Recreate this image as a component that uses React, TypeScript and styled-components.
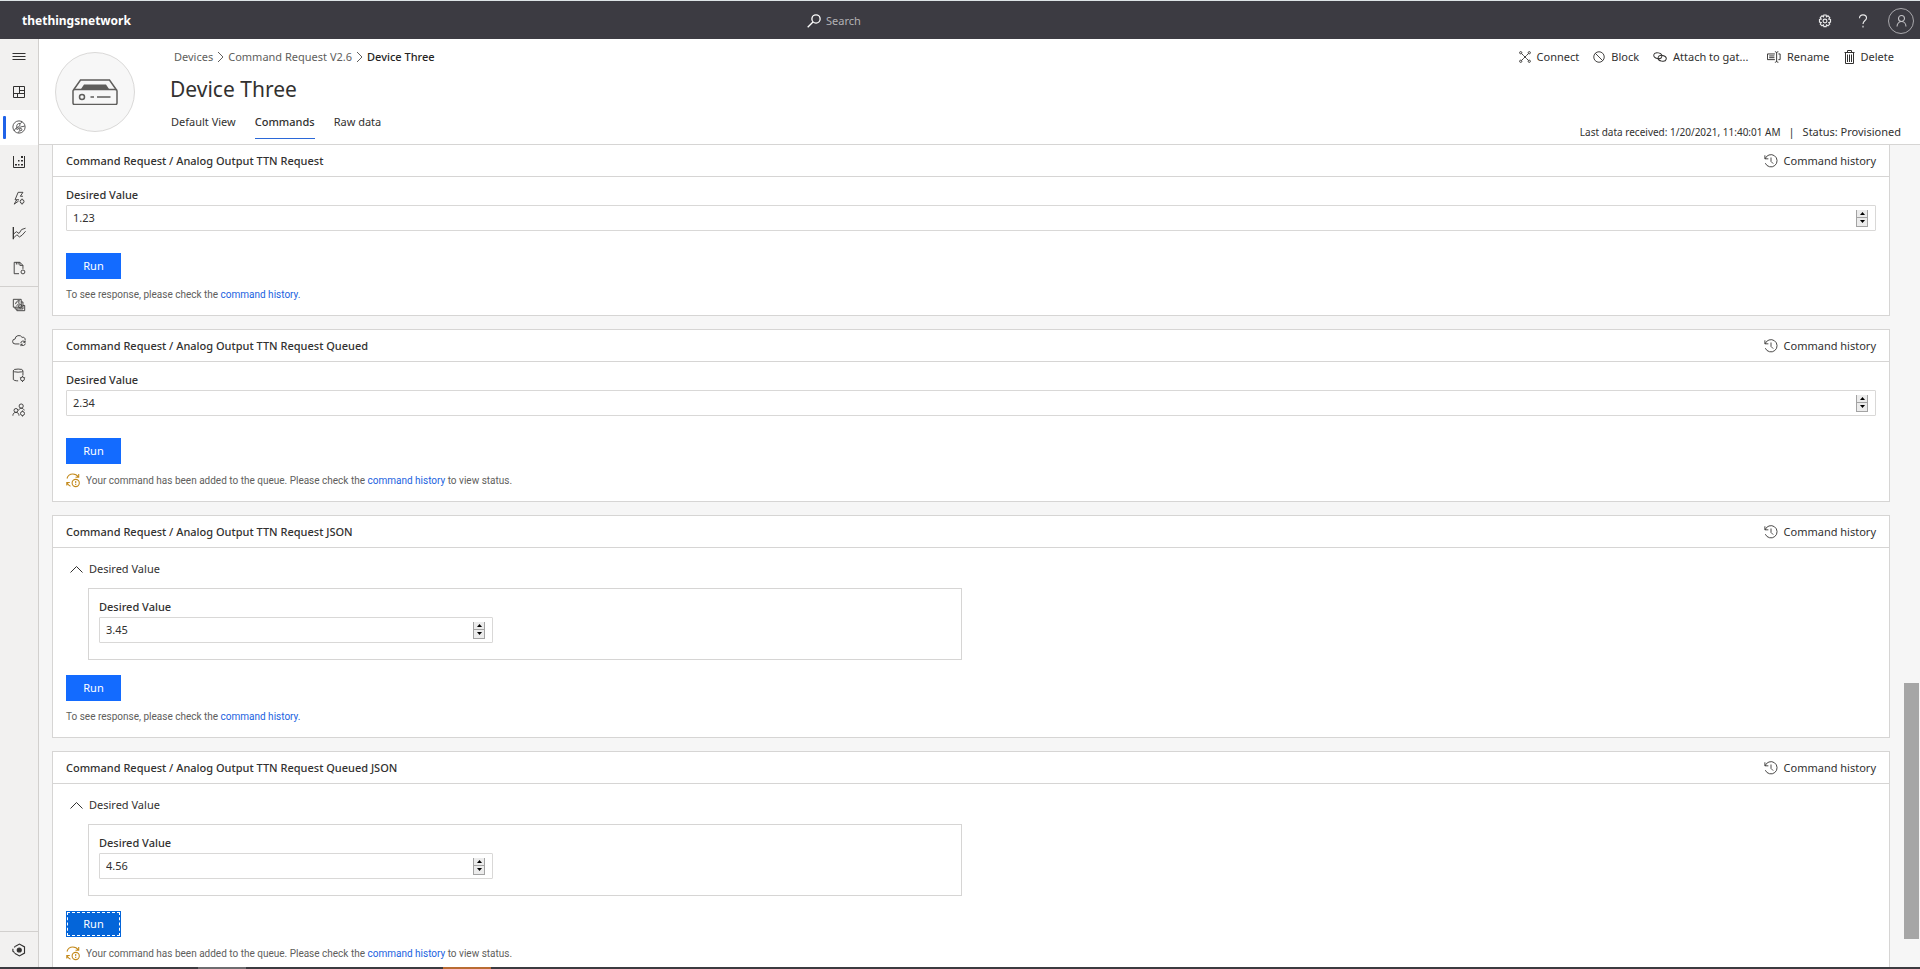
import React, { useId, useState } from "react";
import styled, { createGlobalStyle } from "styled-components";

const GlobalStyle = createGlobalStyle`
  *, *::before, *::after { box-sizing: border-box; }
  body {
    margin: 0;
    background: #f6f6f6;
    color: #323130;
    font-family: "Noto Sans", "Open Sans", sans-serif;
    font-size: 11px;
    line-height: 16px;
  }
  button, input { font: inherit; color: inherit; }
  button {
    margin: 0;
    padding: 0;
    border: 0;
    background: none;
    cursor: pointer;
  }
  a { color: #1a62e0; text-decoration: none; }
`;

/* ---------- page frame ---------- */

const Page = styled.div`
  display: flex;
  flex-direction: column;
  height: 100vh;
`;

const Shell = styled.div`
  display: flex;
  flex: 1;
  min-height: 0;
`;

const Workspace = styled.div`
  display: flex;
  flex: 1;
  flex-direction: column;
  min-width: 0;
`;

const BottomStrip = styled.div`
  height: 2px;
  background: linear-gradient(
    to right,
    #3c3b40 198px,
    #6e6d70 198px 246px,
    #3c3b40 246px 443px,
    #b96c33 443px 491px,
    #3c3b40 491px
  );
`;

/* ---------- top bar ---------- */

const TopBar = styled.header`
  display: grid;
  grid-template-columns: 1fr 320px 1fr;
  align-items: center;
  height: 39px;
  padding: 1px 0 0 22px;
  border-top: 1px solid #dde4e6;
  background: #3c3b42;
  color: #fff;
`;

const Brand = styled.span`
  font-size: 12px;
  font-weight: 700;
`;

const SearchBox = styled.label`
  display: flex;
  align-items: center;
  gap: 5px;
  padding-left: 7px;
  margin-left: -11px;
  margin-right: 11px;
`;

const SearchInput = styled.input`
  flex: 1;
  min-width: 0;
  padding: 0;
  border: 0;
  outline: 0;
  background: none;
  &::placeholder { color: #b3b2b5; opacity: 1; }
`;

const TopActions = styled.div`
  display: flex;
  align-items: center;
  justify-content: flex-end;
  gap: 12px;
  padding-right: 6px;
`;

const TopButton = styled.button`
  display: flex;
  align-items: center;
  justify-content: center;
  width: 26px;
  height: 26px;
  color: #e9e9ea;
`;

const AvatarButton = styled(TopButton)`
  border: 1px solid #a9a8ac;
  border-radius: 50%;
  color: #c4c3c6;
`;

/* ---------- side navigation ---------- */

const SideNav = styled.nav`
  display: flex;
  flex-direction: column;
  width: 39px;
  border-right: 1px solid #d2d0ce;
  background: #f2f1f0;
`;

const NavGroup = styled.div`
  display: flex;
  flex-direction: column;
  &:first-child { height: 247px; }
  & + & { border-top: 1px solid #d2d0ce; }
  &:last-child { margin-top: auto; }
`;

const NavButton = styled.button<{ $active?: boolean }>`
  position: relative;
  display: flex;
  flex: 1 0 35px;
  align-items: center;
  justify-content: center;
  background: ${(p) => (p.$active ? "#fff" : "none")};
  &::before {
    content: "";
    position: absolute;
    left: 3px;
    width: 3px;
    height: 23px;
    border-radius: 1px;
    background: ${(p) => (p.$active ? "#1f62e8" : "none")};
  }
`;

/* ---------- device header ---------- */

const DeviceHeader = styled.section`
  display: flex;
  height: 106px;
  padding: 0 19px 0 16px;
  border-bottom: 1px solid #d6d5d4;
  background: #fff;
`;

const DeviceBadge = styled.div`
  display: flex;
  flex: none;
  align-items: center;
  justify-content: center;
  width: 80px;
  height: 80px;
  margin: 13px 35px 0 0;
  border: 1px solid #dad9d8;
  border-radius: 50%;
  background: #f7f7f7;
  color: #5f5e5c;
`;

const DeviceInfo = styled.div`
  display: flex;
  flex: 1;
  flex-direction: column;
  padding-top: 10px;
`;

const Crumbs = styled.nav`
  display: flex;
  align-items: center;
  gap: 4px;
  padding-left: 4px;
  color: #605e5c;
  a { color: inherit; }
`;

const CurrentCrumb = styled.span`
  color: #252423;
  font-weight: 500;
`;

const Title = styled.h1`
  margin: 9px 0 8px;
  font-size: 21px;
  font-weight: 400;
  line-height: 30px;
`;

const Tabs = styled.div`
  display: flex;
  gap: 19px;
  padding-left: 1px;
`;

const Tab = styled.button<{ $selected?: boolean }>`
  height: 27px;
  padding-bottom: 7px;
  border-bottom: 1px solid ${(p) => (p.$selected ? "#2b68d8" : "transparent")};
  font-weight: ${(p) => (p.$selected ? 500 : 400)};
`;

const HeaderSide = styled.div`
  display: flex;
  flex-direction: column;
  align-items: flex-end;
  justify-content: space-between;
  padding: 10px 0 4px;
`;

const Toolbar = styled.div`
  display: flex;
  gap: 14px;
  padding-right: 7px;
`;

const ToolButton = styled.button<{ $wide?: boolean }>`
  display: flex;
  align-items: center;
  gap: 6px;
  min-width: ${(p) => (p.$wide ? "100px" : "0")};
  height: 16px;
`;

const StatusLine = styled.div`
  display: flex;
  align-items: center;
  gap: 8px;
`;

const Received = styled.span`
  font-size: 10px;
`;

/* ---------- command cards ---------- */

const Content = styled.main`
  display: flex;
  flex: 1;
  min-height: 0;
  overflow: hidden;
`;

const CardList = styled.div`
  display: flex;
  flex: 1;
  flex-direction: column;
  gap: 13px;
  min-width: 0;
  margin-top: -1px;
  padding: 0 14px 0 13px;
`;

const Card = styled.section`
  flex: none;
  border: 1px solid #d6d5d4;
  background: #fff;
`;

const CardHeader = styled.div`
  display: flex;
  align-items: center;
  justify-content: space-between;
  height: 32px;
  padding: 0 13px;
  border-bottom: 1px solid #d6d5d4;
`;

const CardTitle = styled.h2`
  margin: 0;
  font-size: 11px;
  font-weight: 500;
`;

const CardBody = styled.div`
  display: flex;
  flex-direction: column;
  align-items: flex-start;
  padding: 10px 13px 13px;
`;

const FieldBlock = styled.div`
  display: flex;
  flex-direction: column;
  gap: 2px;
  width: 100%;
`;

const FieldLabel = styled.label`
  font-weight: 500;
`;

const NumberBox = styled.div`
  display: flex;
  align-items: center;
  height: 26px;
  padding: 0 7px 0 6px;
  border: 1px solid #d9d8d7;
  border-radius: 1px;
`;

const NumberInput = styled.input`
  flex: 1;
  min-width: 0;
  padding: 0;
  border: 0;
  outline: 0;
  background: none;
  appearance: textfield;
  &::-webkit-inner-spin-button { display: none; }
`;

const Stepper = styled.div`
  display: flex;
  flex-direction: column;
  width: 12px;
  height: 17px;
  border: solid #a3a3a3;
  border-width: 0 1px 1px;
`;

const StepButton = styled.button`
  display: flex;
  flex: 1;
  align-items: center;
  justify-content: center;
  background: #ececec;
  & + & { border-top: 1px solid #a3a3a3; }
`;

const GroupToggle = styled.button`
  display: flex;
  align-items: center;
  gap: 6px;
  height: 22px;
  padding-left: 4px;
`;

const Group = styled.div`
  width: 874px;
  max-width: 100%;
  margin: 8px 0 0 22px;
  padding: 10px 10px 16px;
  border: 1px solid #d6d5d4;
  ${FieldBlock} { max-width: 394px; }
`;

const RunButton = styled.button<{ $nested?: boolean; $focused?: boolean }>`
  width: 55px;
  height: 26px;
  margin: ${(p) => (p.$nested ? "15px" : "22px")} 0 8px;
  background: ${(p) => (p.$focused ? "#0465d9" : "#136bff")};
  color: #fff;
  outline: ${(p) => (p.$focused ? "1px dashed #fff" : "none")};
  outline-offset: -2px;
`;

const Note = styled.p`
  display: flex;
  align-items: center;
  gap: 6px;
  margin: 0;
  color: #605e5c;
  font-family: Roboto, "Noto Sans", sans-serif;
  font-size: 10px;
  line-height: 15px;
`;

/* ---------- scroll indicator ---------- */

const ScrollTrack = styled.div`
  display: flex;
  flex-direction: column;
  width: 16px;
  padding-right: 1px;
  &::before { content: ""; flex: 538; }
  &::after { content: ""; flex: 28; }
`;

const ScrollThumb = styled.div`
  flex: 256;
  background: #a6a6a6;
`;

/* ---------- icons ---------- */

type GlyphProps = { w?: number; h?: number; box?: string; line?: number; children: React.ReactNode };

const Glyph = ({ w = 14, h = w, box = "0 0 16 16", line = 1, children }: GlyphProps) => (
  <svg width={w} height={h} viewBox={box} fill="none" stroke="currentColor" strokeWidth={line} aria-hidden="true">
    {children}
  </svg>
);

const MenuIcon = () => (
  <Glyph box="0 0 14 14"><path d="M0.5 3.5h13M0.5 6.5h13M0.5 9.5h13" /></Glyph>
);
const DashboardIcon = () => (
  <Glyph box="0 0 14 14"><path d="M1.5 1.5h11v11h-11zM7.5 1.5v7M1.5 8.5h11M7.5 5.5h5M5.5 8.5v4" /></Glyph>
);
const DevicesIcon = () => (
  <Glyph line={0.9}><circle cx="8" cy="8" r="7" /><path d="M2.500 12.500C3 10.500 4 9.800 5 9.500M5.500 8C5 5.500 6.500 3.800 9 4c1.500 0 2-1 2-2.500M9 4v2.500L6.500 8.500M7.500 10.500l2-2.500 5-1M7.500 14.500l1-2.500" /><circle cx="6" cy="9.500" r="1.200" /><circle cx="10" cy="11" r="1.300" /></Glyph>
);
const ScatterIcon = () => (
  <Glyph box="0 0 14 14"><path d="M1.500 1v11.500h11V1" /><g fill="currentColor" stroke="none"><rect x="9" y="1" width="2" height="2" /><rect x="9" y="5" width="2" height="1.500" /><rect x="6" y="5" width="1.500" height="1.500" /><rect x="3" y="9" width="2" height="1.500" /><rect x="6" y="9" width="1.500" height="1.500" /><rect x="9" y="9" width="2" height="1.500" /></g></Glyph>
);
const RulesIcon = () => (
  <Glyph><path d="M8 10H3.500L7 1.500h5.500L9.500 6h3M5.500 10l-3 5L7.500 11.500" /><circle cx="11.500" cy="12" r="2.200" /><path d="M11.500 8.700v1.100M11.500 14.200v1.300" /></Glyph>
);
const LineChartIcon = () => (
  <Glyph><path d="M1.500 1v14" strokeWidth="1.500" /><path d="M2 9l3-2.500 3 2L11 4l4.500-1.500M2 13.500l3.500-3.500 3 2.500 3-2 4-4.500" /></Glyph>
);
const JobsIcon = () => (
  <Glyph><path d="M8 14.500H2.500v-13H9L12.500 5v4M5 1.500V4M7 1.500V4M9 1.500V5h3.500" /><circle cx="12.500" cy="12.500" r="2.200" /></Glyph>
);
const TemplatesIcon = () => (
  <Glyph><path d="M1.500 1.500h9v9h-9z" /><path d="M3.500 10.500v2h9v-8h-2M5.500 12.500v2h9v-6h-2" /><path d="M4 7l1-2.500 2-1.500h1.500L7 5.500M5 9l4-3.500" /><circle cx="9.500" cy="9.500" r="2" /></Glyph>
);
const ExportIcon = () => (
  <Glyph><path d="M8.500 12.500H3.500a2.800 2.800 0 0 1 0-5.600A4.300 4.300 0 0 1 11.500 5a2.600 2.600 0 0 1 3.500 3" /><path d="M10 11.500a2.700 2.700 0 0 1 5-1M15 8.500v2.200h-2M15.200 12a2.700 2.700 0 0 1-5 1M10.200 15v-2.200h2" /></Glyph>
);
const StorageIcon = () => (
  <Glyph><ellipse cx="7" cy="3" rx="5.500" ry="1.800" /><path d="M1.500 3v10c0 1 2.500 1.700 5.500 1.700M12.500 3v5.500" /><circle cx="12" cy="12.500" r="2.200" /><path d="M12 9v1.300M12 14.700V16M9 10.800l1.100.6M15 10.800l-1.100.6" /></Glyph>
);
const PeopleIcon = () => (
  <Glyph><circle cx="10.500" cy="3.500" r="2.400" /><circle cx="4.500" cy="8.500" r="2.200" /><path d="M1 14.500c0-2.500 1.500-3.800 3.500-3.800S8 12 8 14.500M7.500 8.500c.5-1.600 1.500-2.500 3-2.500 1.800 0 3 1 3.500 2.500" /><circle cx="12" cy="12" r="2.300" /><path d="M12 8.500v1.200M12 14.300v1.200" /></Glyph>
);
const CentralIcon = () => (
  <Glyph line={1.300}><path d="M4 3.700L8.500 1.200l5.800 3.300v7l-5.800 3.300-5.500-3" /><path d="M1 6.500v3l2 1.500M4 3.700L2.500 5" /><circle cx="8.300" cy="8" r="2.300" fill="currentColor" /></Glyph>
);
const SearchIcon = () => (
  <Glyph line={1.500}><circle cx="10.300" cy="5.700" r="4.700" /><path d="M6.800 9.200L.8 15.200" /></Glyph>
);
const GearIcon = () => (
  <Glyph line={1.300}>
    <path d="M6.700 1.200h2.600l.4 2 1.700-1.100 2 2-1.100 1.700 2 .5v3l-2 .5 1.100 1.700-2 2-1.700-1.100-.4 2.100H6.700l-.4-2.100-1.700 1.100-2-2 1.100-1.700-2-.5v-3l2-.5-1.100-1.700 2-2 1.700 1.100z" />
    <circle cx="8" cy="8" r="2.200" />
  </Glyph>
);
const HelpIcon = () => (
  <Glyph line={1.300}><path d="M4 4.800C4 2.500 5.600 1 8 1s4 1.400 4 3.600C12 7.400 8 7.600 8 11.500M8 13.500V15.300" /></Glyph>
);
const UserIcon = () => (
  <Glyph w={13} line={1.300}><circle cx="8" cy="5.500" r="3.700" /><path d="M2.500 15.500c0-3.500 2.300-6.200 5.500-6.200s5.500 2.700 5.500 6.200" /></Glyph>
);
const CrumbChevron = () => (
  <Glyph w={7} h={12} box="0 0 7 12"><path d="M1 1l5 5-5 5" /></Glyph>
);
const DeviceIcon = () => (
  <Glyph w={46} h={26} box="0 0 46 26" line={1.500}>
    <path d="M1 12a1.500 1.500 0 0 1 1.500-1.500h41A1.500 1.500 0 0 1 45 12v12a1.500 1.500 0 0 1-1.500 1.500h-41A1.500 1.500 0 0 1 1 24z" />
    <path d="M1.500 11L8.500 1h29l7 10" />
    <path d="M12 5.500h22l3 4.500H9z" fill="currentColor" stroke="none" />
    <circle cx="10" cy="18" r="2.500" />
    <path d="M18.500 18h3.500M25 18h13.500" />
  </Glyph>
);
const ConnectIcon = () => (
  <Glyph w={12} line={1.200}><path d="M3.500 3.500L6 6M12.500 3.500L10 6M3.500 12.500L6 10M12.500 12.500L10 10M6 6l4 4M10 6l-4 4" /><circle cx="2.300" cy="2.300" r="1.500" /><circle cx="13.700" cy="2.300" r="1.500" /><circle cx="2.300" cy="13.700" r="1.500" /><circle cx="13.700" cy="13.700" r="1.500" /></Glyph>
);
const BlockIcon = () => (
  <Glyph w={12} line={1.200}><circle cx="8" cy="8" r="7" /><path d="M3 3l10 10" /></Glyph>
);
const AttachIcon = () => (
  <Glyph line={1.100}>
    <ellipse cx="5.500" cy="6.500" rx="4.700" ry="3.300" transform="rotate(12 5.500 6.500)" />
    <ellipse cx="10.500" cy="9.500" rx="4.700" ry="3.300" transform="rotate(12 10.500 9.500)" />
  </Glyph>
);
const RenameIcon = () => (
  <Glyph line={1.100}><path d="M9 4.500H.5v6.500H9M2.500 6.800h6M2.500 8.800h6M9 2c1.500 0 2 .5 2 1.500v9c0 1-.5 1.500-2 1.500M13 2c-1.500 0-2 .5-2 1.500M13 14c-1.500 0-2-.5-2-1.500M13 4.500h2V11h-2" /></Glyph>
);
const DeleteIcon = () => (
  <Glyph w={11} h={14} box="0 0 11 14"><path d="M0.500 2.500h10M3.500 2.500v-2h4v2M1.500 2.500v11h8v-11M3.500 4.500v7.500M5.500 4.500v7.500M7.500 4.500v7.500" /></Glyph>
);
const HistoryIcon = () => (
  <Glyph><path d="M1 1.500v4h4" /><path d="M1.300 5.500A7 7 0 1 1 1.500 10.500" /><path d="M8 4v4.500l2.500 2.500" /></Glyph>
);
const ChevronUpIcon = () => (
  <Glyph w={13} h={9} box="0 0 13 9"><path d="M0.500 7.500l6-6 6 6" /></Glyph>
);
const QueuedIcon = () => (
  <Glyph w={14} h={16} box="0 0 14 16" line={1.100}>
    <g stroke="#c48a1c">
      <path d="M1 6.500C1.800 3.700 4 2 6.800 2c2.500 0 4.200 1 5.400 3M12.700 2v3.300H9.500" />
      <path d="M4.500 14.200C2.800 13.600 1.800 12.500 1.200 11M.8 13.500V10.500h3" />
      <circle cx="9.700" cy="11" r="3.600" />
      <path d="M9.700 9v2.200M9.700 12v1" />
    </g>
  </Glyph>
);
const Arrow = ({ down }: { down?: boolean }) => (
  <svg width="5" height="3" viewBox="0 0 5 3" fill="#000" aria-hidden="true">
    <path d={down ? "M0 0h5L2.500 3z" : "M0 3h5L2.500 0z"} />
  </svg>
);

/* ---------- parts ---------- */

const mainNav = [
  { name: "Menu", Icon: MenuIcon },
  { name: "Dashboard", Icon: DashboardIcon },
  { name: "Devices", Icon: DevicesIcon },
  { name: "Device groups", Icon: ScatterIcon },
  { name: "Rules", Icon: RulesIcon },
  { name: "Analytics", Icon: LineChartIcon },
  { name: "Jobs", Icon: JobsIcon },
];

const manageNav = [
  { name: "Device templates", Icon: TemplatesIcon },
  { name: "Data export", Icon: ExportIcon },
  { name: "Data storage", Icon: StorageIcon },
  { name: "Administration", Icon: PeopleIcon },
];

const tools = [
  { name: "Connect", Icon: ConnectIcon },
  { name: "Block", Icon: BlockIcon },
  { name: "Attach to gat...", Icon: AttachIcon, wide: true },
  { name: "Rename", Icon: RenameIcon },
  { name: "Delete", Icon: DeleteIcon },
];

function NumberField({ initial }: { initial: string }) {
  const id = useId();
  const [value, setValue] = useState(initial);
  const step = (by: number) => setValue((Number(value) + by).toFixed(2));
  return (
    <FieldBlock>
      <FieldLabel htmlFor={id}>Desired Value</FieldLabel>
      <NumberBox>
        <NumberInput id={id} type="number" step="0.01" value={value} onChange={(e) => setValue(e.target.value)} />
        <Stepper>
          <StepButton type="button" aria-label="Increase" onClick={() => step(1)}><Arrow /></StepButton>
          <StepButton type="button" aria-label="Decrease" onClick={() => step(-1)}><Arrow down /></StepButton>
        </Stepper>
      </NumberBox>
    </FieldBlock>
  );
}

type Command = { title: string; value: string; queued?: boolean; nested?: boolean; focused?: boolean };

function CommandCard({ title, value, queued, nested, focused }: Command) {
  const [open, setOpen] = useState(true);
  return (
    <Card>
      <CardHeader>
        <CardTitle>{title}</CardTitle>
        <ToolButton type="button"><HistoryIcon />Command history</ToolButton>
      </CardHeader>
      <CardBody>
        {nested ? (
          <>
            <GroupToggle type="button" aria-expanded={open} onClick={() => setOpen(!open)}>
              <ChevronUpIcon />Desired Value
            </GroupToggle>
            {open && <Group><NumberField initial={value} /></Group>}
          </>
        ) : (
          <NumberField initial={value} />
        )}
        <RunButton type="button" $nested={nested} $focused={focused}>Run</RunButton>
        {queued ? (
          <Note>
            <QueuedIcon />
            <span>
              Your command has been added to the queue. Please check the <a href="#history">command history</a> to view status.
            </span>
          </Note>
        ) : (
          <Note>
            <span>To see response, please check the <a href="#history">command history.</a></span>
          </Note>
        )}
      </CardBody>
    </Card>
  );
}

const commands: Command[] = [
  { title: "Command Request / Analog Output TTN Request", value: "1.23" },
  { title: "Command Request / Analog Output TTN Request Queued", value: "2.34", queued: true },
  { title: "Command Request / Analog Output TTN Request JSON", value: "3.45", nested: true },
  { title: "Command Request / Analog Output TTN Request Queued JSON", value: "4.56", queued: true, nested: true, focused: true },
];

export default function App() {
  return (
    <Page>
      <GlobalStyle />
      <TopBar>
        <Brand>thethingsnetwork</Brand>
        <SearchBox>
          <SearchIcon />
          <SearchInput type="search" placeholder="Search" aria-label="Search" />
        </SearchBox>
        <TopActions>
          <TopButton type="button" aria-label="Settings"><GearIcon /></TopButton>
          <TopButton type="button" aria-label="Help"><HelpIcon /></TopButton>
          <AvatarButton type="button" aria-label="Account"><UserIcon /></AvatarButton>
        </TopActions>
      </TopBar>
      <Shell>
        <SideNav aria-label="Main">
          <NavGroup>
            {mainNav.map(({ name, Icon }) => (
              <NavButton key={name} type="button" aria-label={name} $active={name === "Devices"}><Icon /></NavButton>
            ))}
          </NavGroup>
          <NavGroup>
            {manageNav.map(({ name, Icon }) => (
              <NavButton key={name} type="button" aria-label={name}><Icon /></NavButton>
            ))}
          </NavGroup>
          <NavGroup>
            <NavButton type="button" aria-label="IoT Central home"><CentralIcon /></NavButton>
          </NavGroup>
        </SideNav>
        <Workspace>
          <DeviceHeader>
            <DeviceBadge><DeviceIcon /></DeviceBadge>
            <DeviceInfo>
              <Crumbs aria-label="Breadcrumb">
                <a href="#devices">Devices</a>
                <CrumbChevron />
                <a href="#template">Command Request V2.6</a>
                <CrumbChevron />
                <CurrentCrumb>Device Three</CurrentCrumb>
              </Crumbs>
              <Title>Device Three</Title>
              <Tabs role="tablist">
                <Tab type="button" role="tab">Default View</Tab>
                <Tab type="button" role="tab" aria-selected $selected>Commands</Tab>
                <Tab type="button" role="tab">Raw data</Tab>
              </Tabs>
            </DeviceInfo>
            <HeaderSide>
              <Toolbar>
                {tools.map(({ name, Icon, wide }) => (
                  <ToolButton key={name} type="button" $wide={wide}><Icon />{name}</ToolButton>
                ))}
              </Toolbar>
              <StatusLine>
                <Received>Last data received: 1/20/2021, 11:40:01 AM</Received>
                <span>|</span>
                <span>Status: Provisioned</span>
              </StatusLine>
            </HeaderSide>
          </DeviceHeader>
          <Content>
            <CardList>
              {commands.map((command) => <CommandCard key={command.title} {...command} />)}
            </CardList>
            <ScrollTrack><ScrollThumb /></ScrollTrack>
          </Content>
        </Workspace>
      </Shell>
      <BottomStrip />
    </Page>
  );
}
